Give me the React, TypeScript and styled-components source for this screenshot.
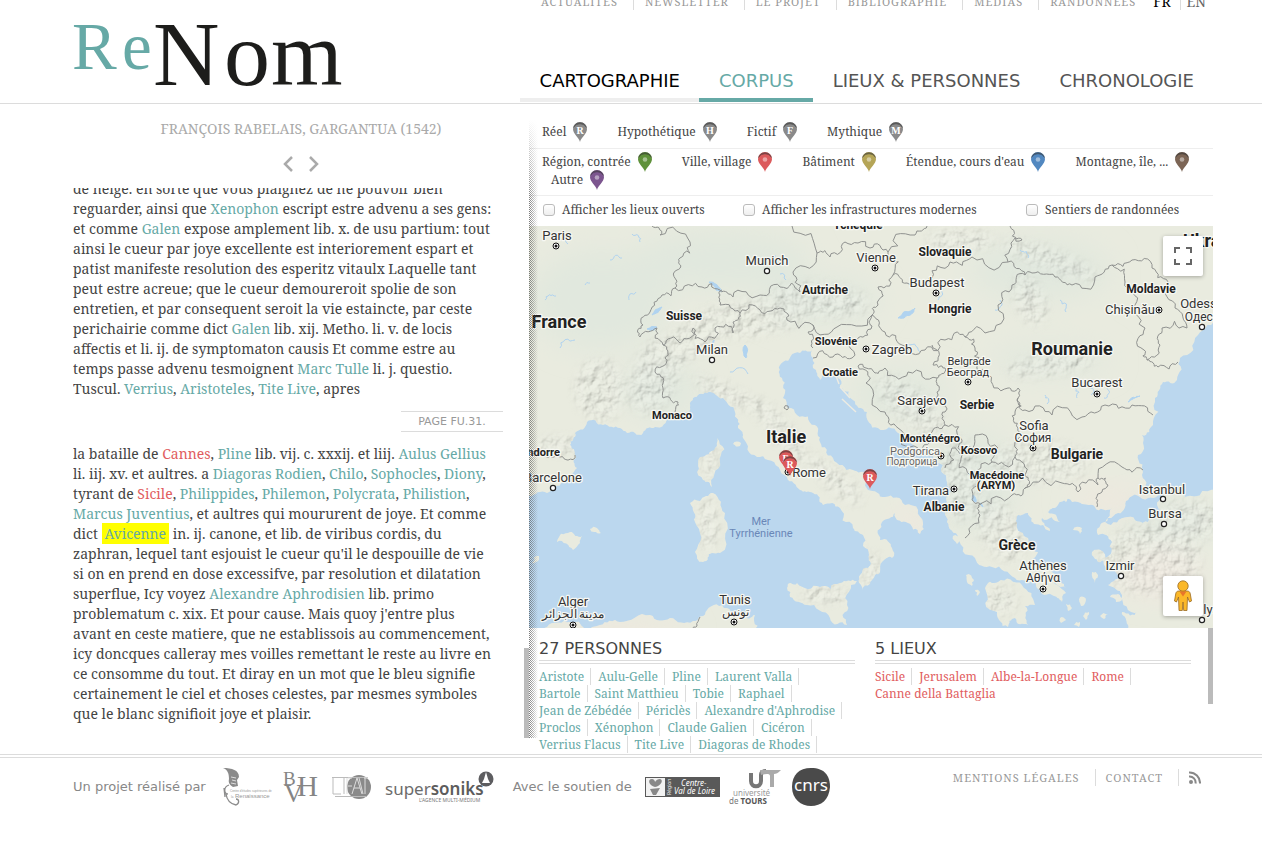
import React from 'react';
import styled, { createGlobalStyle } from 'styled-components';

const serif = "'Noto Serif', 'Liberation Serif', serif";
const sans = "'DejaVu Sans', 'Liberation Sans', sans-serif";
const teal = '#66a9a6';
const red = '#e15d60';
const rule = '#dcdcdc';

const GlobalStyle = createGlobalStyle`
  * { box-sizing: border-box; }
  html { background: #fff; }
  body { margin: 0; font-family: ${serif}; font-size: 14px; line-height: 20px; color: #444; }
  a { color: inherit; text-decoration: none; }
  ul { list-style: none; margin: 0; padding: 0; }
  h1, h2, p { margin: 0; font-weight: normal; }
  button { border: 0; padding: 0; background: none; cursor: pointer; }
`;

/* ---------- header ---------- */

const Header = styled.header`
  display: flex;
  justify-content: space-between;
  height: 104px;
  padding: 0 49px 0 73px;
  border-bottom: 1px solid ${rule};
`;
const LogoLink = styled.a`
  display: block;
  padding-top: 19px;
  svg { display: block; overflow: visible; }
`;
const Menus = styled.div`
  display: flex;
  flex-direction: column;
  justify-content: space-between;
  align-items: flex-end;
  padding-bottom: 1px;
`;
const TopMenu = styled.nav`
  display: flex;
  margin-top: -7px;
  padding-right: 7px;
`;
const SmallLink = styled.a`
  padding: 0 15px 0 11px;
  border-right: 1px solid ${rule};
  font-size: 11px;
  line-height: 17px;
  letter-spacing: 1px;
  text-transform: uppercase;
  color: #999;
  white-space: nowrap;
  &:nth-last-of-type(3) { border-right: 0; }
`;
const LangLink = styled.a<{ $active?: boolean }>`
  padding: 0 0 0 6px;
  line-height: 17px;
  color: ${p => (p.$active ? '#000' : '#666')};
  border-left: ${p => (p.$active ? 0 : 1)}px solid ${rule};
  margin-right: ${p => (p.$active ? 9 : 0)}px;
  margin-left: ${p => (p.$active ? -4 : 0)}px;
`;
const MainMenu = styled.nav`
  display: flex;
`;
const MainLink = styled.a<{ $tone?: 'black' | 'teal' }>`
  padding: 0 19px 7px 20px;
  font: 18px/20px ${sans};
  text-transform: uppercase;
  white-space: nowrap;
  color: ${p => (p.$tone === 'black' ? '#000' : p.$tone === 'teal' ? teal : '#555')};
  border-bottom: 4px solid ${p => (p.$tone === 'black' ? '#eee' : p.$tone === 'teal' ? teal : 'transparent')};
`;

/* ---------- main columns ---------- */

const Main = styled.main`
  display: grid;
  grid-template-columns: 2fr 3fr;
  height: calc(100vh - 195px);
  min-height: 480px;
  padding: 0 49px 0 73px;
`;
const Reader = styled.section`
  display: flex;
  flex-direction: column;
  min-height: 0;
  padding-bottom: 16px;
`;
const WorkTitle = styled.h1`
  padding-top: 15px;
  font-size: 14px;
  line-height: 20px;
  text-align: center;
  text-transform: uppercase;
  color: #aaa;
`;
const Pager = styled.div`
  display: flex;
  justify-content: center;
  gap: 14px;
  padding: 16px 0 15px;
  svg { display: block; }
`;
const TextPane = styled.div`
  display: flex;
  flex: 1;
  min-height: 0;
  overflow: hidden;
`;
const TextFlow = styled.div`
  flex: 1;
  margin-top: -9px;
  white-space: nowrap;
`;
const PageMark = styled.div`
  width: 102px;
  margin: 12px 21px 12px auto;
  border: solid ${rule};
  border-width: 1px 0;
  font: 11px/19px ${sans};
  text-align: center;
  text-transform: uppercase;
  color: #999;
`;
const Person = styled.a<{ $marked?: boolean }>`
  color: ${teal};
  ${p => p.$marked && 'background: #ff0; padding: 1px 3px;'}
`;
const Place = styled.a`
  color: ${red};
`;
const Thumb = styled.div<{ $height: number; $end?: boolean }>`
  flex: none;
  width: 5px;
  height: ${p => p.$height}px;
  align-self: ${p => (p.$end ? 'flex-end' : 'flex-start')};
  background: #bbb;
`;

const Atlas = styled.section`
  position: relative;
  display: flex;
  flex-direction: column;
  min-height: 0;
  min-width: 0;
`;
const EdgeShadow = styled.div`
  position: absolute;
  z-index: 2;
  left: 0;
  top: 16px;
  bottom: 16px;
  width: 9px;
  pointer-events: none;
  background: conic-gradient(#555 25%, transparent 0 50%, #555 0 75%, transparent 0) 0 0 / 2px 2px;
  mask-image: linear-gradient(to right, rgba(0, 0, 0, 0.8), transparent), linear-gradient(to bottom, transparent, #000 80px);
  mask-composite: intersect;
`;
const FilterRow = styled.div`
  display: flex;
  flex-wrap: wrap;
  column-gap: 30px;
  padding: 19px 0 7px 13px;
  border-bottom: 1px solid #eee;
  font-size: 12px;
`;
const KindRow = styled(FilterRow)`
  padding: 4px 0 6px 13px;
  > :last-child { margin-left: 9px; }
`;
const FilterLink = styled.a`
  display: flex;
  align-items: center;
  gap: 7px;
  height: 18px;
  white-space: nowrap;
  svg { flex: none; margin: -1px 0; overflow: visible; }
`;
const ToggleRow = styled.div`
  display: grid;
  grid-template-columns: 200px 283px 1fr;
  padding: 4px 0 6px 13px;
  font-size: 12px;
`;
const Toggle = styled.label`
  display: flex;
  align-items: center;
  white-space: nowrap;
`;
const Check = styled.input`
  appearance: none;
  width: 12px;
  height: 12px;
  margin: 0 7px 0 1px;
  border: 1px solid #bbb;
  border-radius: 3px;
  background: linear-gradient(#fff, #eee);
`;
const MapBox = styled.div`
  position: relative;
  flex: 1;
  min-height: 0;
  overflow: hidden;
  > svg { display: block; width: 100%; height: 100%; }
`;
const MapButton = styled.button<{ $bottom?: boolean }>`
  position: absolute;
  right: 10px;
  ${p => (p.$bottom ? 'bottom: 12px;' : 'top: 10px;')}
  display: grid;
  place-items: center;
  width: 40px;
  height: 40px;
  border-radius: 2px;
  background: #fff;
  box-shadow: 0 1px 4px rgba(0, 0, 0, 0.3);
`;
const IndexPane = styled.div`
  display: flex;
  height: 126px;
  overflow: hidden;
`;
const IndexColumns = styled.div`
  flex: 1;
  display: grid;
  grid-template-columns: 1fr 1fr;
  gap: 20px;
  padding: 10px 17px 0 10px;
`;
const IndexTitle = styled.h2`
  margin-bottom: 4px;
  padding: 1px 0;
  border-bottom: 4px double ${rule};
  font: 16px/20px ${sans};
  text-transform: uppercase;
`;
const Names = styled.ul<{ $color: string }>`
  display: flex;
  flex-wrap: wrap;
  column-gap: 7px;
  padding-right: 10px;
  font-size: 12px;
  line-height: 17px;
  color: ${p => p.$color};
`;
const Name = styled.li<{ $last?: boolean }>`
  padding-right: 6px;
  border-right: ${p => (p.$last ? 0 : 1)}px solid ${rule};
  white-space: nowrap;
`;

/* ---------- footer ---------- */

const Footer = styled.footer`
  display: flex;
  justify-content: space-between;
  border-top: 4px double ${rule};
  padding: 9px 61px 0 73px;
`;
const Partners = styled.div`
  display: flex;
  gap: 19px;
`;
const PartnerGroup = styled.div<{ $gap: number }>`
  display: flex;
  align-items: center;
  height: 40px;
  gap: ${p => p.$gap}px;
  font: 13px/20px ${sans};
  color: #888;
  white-space: nowrap;
  svg { display: block; flex: none; overflow: visible; }
`;
const PartnerLabel = styled.span`
  margin-right: 4px;
`;
const LegalMenu = styled.nav`
  display: flex;
  align-items: flex-start;
  padding-top: 2px;
`;
const LegalLink = styled(SmallLink)`
  padding: 0 15px 0 10px;
  &:nth-last-of-type(3) { border-right: 1px solid ${rule}; }
`;
const RssLink = styled.a`
  padding: 2px 0 0 10px;
  svg { display: block; }
`;

/* ---------- drawings ---------- */

function Logo() {
  return (
    <svg width="272" height="72" viewBox="73 19 272 72" role="img" aria-label="ReNom" fontFamily="'Liberation Serif', serif">
      <text x="72 122" y="69" fontSize="67" fill={teal}>Re</text>
      <text x="153 224 271" y="85" fontSize="92" fill="#1d1d1b">Nom</text>
    </svg>
  );
}

const pinPath = 'M7 20C6 15.500 0 12 0 7A7 7 0 0 1 14 7C14 12 8 15.500 7 20Z';

function Pin({ color, letter, x, y }: { color: string; letter?: string; x?: number; y?: number }) {
  return (
    <svg width="14" height="20" viewBox="0 0 14 20" x={x} y={y} overflow="visible">
      <path d={pinPath} fill={color} />
      <path d="M.5 5.500A6.800 6.800 0 0 1 13.500 5.500A7.500 7.500 0 0 0 .5 5.500Z" fill="#333" stroke="#333" strokeWidth=".7" opacity=".6" />
      {letter ? (
        <text x="7" y="12" fontSize="10" fontWeight="700" textAnchor="middle" fill="#fff" fontFamily="'Liberation Serif', serif">{letter}</text>
      ) : (
        <circle cx="7" cy="7.500" r="2.300" fill="#fff" opacity=".45" />
      )}
    </svg>
  );
}

type Pt = [number, number];

function parse(s: string): Pt[] {
  return s.trim().split(/\s+/).map(p => p.split(',').map(Number) as Pt);
}

/* Breaks segments into smaller wobbling ones, so coasts and borders look natural.
   Very long segments are the map's frame and stay straight. */
function rough(s: string, amount: number, closed: boolean): string {
  let pts = parse(s);
  if (closed) pts.push(pts[0]);
  let seed = pts.length * 97 + Math.round(pts[0][0]);
  const rnd = () => {
    seed = (seed * 16807) % 2147483647;
    return seed / 2147483647 - 0.5;
  };
  for (let level = 0; level < 3; level++) {
    const out: Pt[] = [pts[0]];
    for (let i = 1; i < pts.length; i++) {
      const [ax, ay] = pts[i - 1];
      const [bx, by] = pts[i];
      const len = Math.hypot(bx - ax, by - ay);
      if (len > 3 && len < 60) {
        const k = rnd() * amount;
        out.push([(ax + bx) / 2 - (by - ay) * k, (ay + by) / 2 + (bx - ax) * k]);
      }
      out.push(pts[i]);
    }
    pts = out;
  }
  return 'M' + pts.map(p => p[0].toFixed(1) + ' ' + p[1].toFixed(1)).join('L') + (closed ? 'Z' : '');
}

const lands = [
  '520,499 529,496 547,493 563,482 577,468 575,455 570,445 575,433 587,422 603,425 620,428 627,433 643,433 655,427 670,418 687,412 693,398 707,393 723,398 735,412 738,428 743,438 757,457 768,460 787,477 800,490 813,493 823,505 840,508 853,528 863,535 869,555 868,568 860,575 862,590 870,584 872,580 880,572 882,562 892,558 892,548 880,540 882,522 895,513 908,523 920,534 923,523 905,505 885,497 868,490 866,480 868,475 853,470 833,458 820,442 815,425 797,415 783,398 782,378 783,362 800,353 812,350 813,358 813,368 820,380 827,372 835,373 840,388 853,400 867,412 878,428 898,433 918,453 943,465 947,482 947,502 947,522 958,538 975,558 992,567 1015,578 1034,582 1042,594 1052,595 1062,602 1066,593 1052,575 1032,565 1038,552 1028,538 1017,523 1018,515 1028,513 1034,524 1050,531 1042,518 1060,522 1048,512 1058,505 1078,502 1095,507 1112,508 1100,525 1118,513 1128,500 1148,498 1158,495 1155,492 1142,475 1138,455 1142,435 1153,425 1155,398 1163,382 1177,380 1180,358 1198,335 1220,320 1220,218 520,218',
  '1165,493 1185,497 1220,496 1220,636 1132,636 1128,625 1122,612 1138,612 1122,595 1108,585 1118,575 1105,558 1112,542 1098,535 1105,522 1128,517 1148,522 1172,513 1158,507 1160,499',
  '787,588 797,583 820,587 840,583 857,581 847,605 847,625 830,618 807,605 790,597',
  '690,503 700,501 713,493 725,513 720,553 712,553 703,562 695,552 695,522',
  '717,438 720,462 712,487 703,480 700,457 715,448',
  '557,542 570,532 582,536 580,543 573,550',
  '590,529 597,528 601,533 594,532',
  '532,563 539,556 536,562',
  '520,636 529,628 547,627 570,622 600,625 620,622 650,615 670,618 693,621 707,610 727,608 743,618 755,615 753,636',
  '985,588 998,582 1022,585 1035,605 1025,606 1028,625 1015,618 1008,627 997,612',
  '1040,566 1056,574 1066,588 1056,584',
  '953,536 960,540 957,544', '966,575 974,580 972,586 967,582', '975,590 980,592 977,596',
  '1092,552 1104,553 1106,560 1098,562', '1092,572 1098,575 1095,583', '1110,597 1122,598 1116,602',
  '1073,530 1082,528 1080,534', '1080,597 1086,600 1081,606', '1066,604 1072,608 1068,611',
  '1083,616 1089,612 1086,620', '1060,618 1066,620 1061,623', '1100,616 1108,614 1104,619', '1074,625 1080,622 1079,627',
  '733,444 741,443 740,446', '1063,494 1070,498 1066,502',
];

const borders = [
  '652,226 660,235 690,242 680,258 677,270 675,288 702,287 720,290 733,297 760,295 780,287 800,292 793,272 817,253 792,226',
  '675,288 662,295 650,312 643,325 640,337 657,328 663,345 665,358 655,372 663,388 663,398 678,402 675,412',
  '663,345 680,343 693,328 705,342 715,328 733,333 733,322 740,313 720,305 722,290',
  '740,313 760,310 780,308 787,320 813,325 837,327 872,315',
  '813,325 808,332 813,348', '813,358 833,357 852,358 858,338 872,326 872,315',
  '817,253 830,257 845,242 870,248 888,252 915,235 927,226',
  '888,252 893,275 907,283 932,278 950,262 972,257 1008,262 1015,238 1022,240 1010,226',
  '893,275 878,287 878,305 872,315 885,332 902,345 925,350 945,340 965,337 985,333 998,305 1012,285 1025,275 1008,262',
  '1025,275 1032,273 1055,277 1072,285 1095,277 1112,265 1132,260 1152,268 1168,282 1175,308 1187,328 1162,328 1160,345 1147,360',
  '1112,265 1125,282 1135,305 1145,328 1144,350 1147,360 1158,367 1178,362',
  '932,345 933,365 945,368 937,378', '858,366 866,368 875,373 885,368 908,372 937,378 937,392 945,412 945,425 932,432 922,450',
  '858,366 866,383 885,412 898,428 918,448',
  '965,337 975,348 980,362 988,375 1008,388 1018,388 1018,398 1025,410 1052,415 1082,417 1105,405 1132,405 1153,415',
  '1018,398 1015,412 1018,428 1015,442 1015,457 1025,475 1025,488 1062,483 1078,492 1098,485 1098,478 1122,467 1143,470',
  '1098,478 1108,485 1102,492 1097,507',
  '1025,488 1012,495 982,503 980,515 965,538', '982,503 973,498 970,475 992,462 1015,457',
  '970,475 962,455 952,448 945,468', '945,425 962,440 962,455 975,435 998,448 992,462',
  '529,453 545,455 560,457 575,455', '693,636 697,626 700,617', '784,408 788,406 787,410 784,408',
];

const lakes = [
  '898,318 912,310 915,308 904,318', '709,282 722,291 716,290', '647,329 657,327 654,330', '745,345 746,358 744,356',
  '714,340 712,345', '973,495 976,502 972,499', '652,315 662,307', '980,503 983,507', '1128,402 1140,396',
];

const streams = [
  '560,240 568,244', '585,285 590,283', '632,234 640,242', '629,300 636,292', '730,372 748,374', '770,260 776,256', '1185,420 1192,416',
  '780,274 786,280', '1020,250 1028,258', '1045,395 1047,404', '1075,388 1077,398', '1090,385 1091,395', '1107,388 1104,398', '940,290 938,300',
  '905,345 920,352', '560,348 575,340', '610,260 622,258', '1060,300 1066,312', '1000,300 995,310', '545,300 556,296',
];

const massifs: [number, number, number, number, number][] = [
  [690, 340, 50, 16, -35], [750, 318, 60, 18, -8], [820, 300, 48, 16, 5], [655, 375, 22, 40, 20], [600, 390, 25, 30, 0], [730, 395, 40, 8, 25],
  [780, 430, 40, 10, 50], [835, 480, 34, 10, 40], [872, 575, 8, 24, 0], [910, 405, 40, 16, 40], [960, 480, 20, 40, 0], [1000, 530, 20, 34, -30],
  [1050, 365, 44, 9, -8], [1030, 300, 14, 26, -20], [1050, 260, 50, 10, 20], [1040, 462, 48, 20, 0], [710, 462, 8, 18, 0], [708, 525, 10, 26, 0],
  [1000, 600, 16, 14, 0], [1150, 560, 50, 34, 0], [1190, 520, 30, 20, 0], [560, 445, 26, 8, 0], [825, 595, 24, 8, 0], [960, 240, 34, 10, 0],
];

type Label = [string, number, number, number, ('b' | 'n' | 's')?];
const labels: Label[] = [
  ['France', 559, 328, 18, 'b'], ['Paris', 557, 240, 13], ['Munich', 767, 265, 13], ['Tchéquie', 858, 229, 12, 'b'],
  ['Autriche', 825, 294, 12, 'b'], ['Suisse', 684, 320, 12, 'b'], ['Milan', 712, 354, 13], ['Slovénie', 836, 345, 11, 'b'],
  ['Croatie', 840, 376, 11, 'b'], ['Monaco', 672, 419, 11, 'b'], ['Slovaquie', 945, 256, 12, 'b'], ['Vienne', 876, 262, 13],
  ['Budapest', 937, 287, 13], ['Hongrie', 950, 313, 12, 'b'], ['Zagreb', 892, 354, 13], ['Belgrade', 969, 365, 11],
  ['Београд', 968, 376, 11], ['Sarajevo', 922, 405, 13], ['Serbie', 977, 409, 12, 'b'], ['Roumanie', 1072, 355, 18, 'b'],
  ['Bucarest', 1097, 387, 13], ['Moldavie', 1151, 293, 12, 'b'], ['Chișinău', 1130, 314, 13], ['Odessa', 1202, 308, 13],
  ['Одеса', 1202, 321, 12], ['Ukraine', 1214, 247, 18, 'b'], ['Sofia', 1034, 430, 13], ['София', 1033, 442, 12],
  ['Bulgarie', 1077, 459, 14, 'b'], ['Monténégro', 930, 442, 11, 'b'], ['Podgorica', 915, 455, 11, 's'], ['Подгорица', 912, 465, 10, 's'],
  ['Kosovo', 979, 454, 11, 'b'], ['Macédoine', 997, 479, 11, 'b'], ['(ARYM)', 996, 489, 11, 'b'], ['Tirana', 931, 495, 13],
  ['Albanie', 944, 511, 12, 'b'], ['Istanbul', 1162, 494, 13], ['Bursa', 1165, 518, 13], ['Grèce', 1017, 550, 14, 'b'],
  ['Athènes', 1043, 570, 13], ['Αθήνα', 1043, 582, 12], ['Izmir', 1120, 570, 13], ['Antalya', 1198, 614, 13],
  ['Italie', 786, 443, 18, 'b'], ['Rome', 809, 477, 13], ['Andorre', 540, 456, 11, 'b'], ['Barcelone', 553, 482, 13],
  ['Alger', 573, 606, 13], ['مدينة الجزائر', 573, 618, 12], ['Tunis', 735, 604, 13], ['تونس', 735, 616, 12],
];
const capitals: Pt[] = [[556, 246], [875, 268], [936, 293], [866, 349], [968, 382], [922, 411], [1097, 394], [1159, 310], [1033, 448], [941, 456], [954, 489], [1043, 589], [788, 472], [573, 625], [734, 622]];
const cities: Pt[] = [[767, 271], [712, 360], [1202, 327], [1163, 499], [1164, 524], [1121, 576], [553, 488], [1202, 620]];

function EuropeMap() {
  return (
    <svg viewBox="529 226 684 402" preserveAspectRatio="xMidYMid slice" role="img" aria-label="Carte des lieux" fontFamily="Roboto, sans-serif">
      <defs>
        <clipPath id="land">{lands.map(l => <path key={l} d={rough(l, 0.5, true)} />)}</clipPath>
        <filter id="relief" x="0" y="0" width="100%" height="100%">
          <feTurbulence type="fractalNoise" baseFrequency="0.1" numOctaves="4" seed="4" result="n" />
          <feDiffuseLighting in="n" lightingColor="#f4f7f0" surfaceScale="4.500" diffuseConstant="1.050"><feDistantLight azimuth="225" elevation="52" /></feDiffuseLighting>
        </filter>
        <filter id="soft"><feGaussianBlur stdDeviation="5" /></filter>
        <filter id="wide"><feGaussianBlur stdDeviation="14" /></filter>
        <mask id="massifs">
          <g filter="url(#soft)">
            {massifs.map(([x, y, rx, ry, a]) => <ellipse key={x + '-' + y} cx={x} cy={y} rx={rx} ry={ry} fill="#fff" transform={`rotate(${a} ${x} ${y})`} />)}
          </g>
        </mask>
      </defs>
      <rect x="520" y="218" width="700" height="420" fill="#bbd7ee" />
      <g clipPath="url(#land)">
        <rect x="520" y="218" width="700" height="420" fill="#e9ebdf" />
        <g fill="#e1e8de" filter="url(#wide)">
          <ellipse cx="600" cy="300" rx="70" ry="50" /><ellipse cx="720" cy="260" rx="90" ry="30" /><ellipse cx="900" cy="395" rx="50" ry="24" />
          <ellipse cx="1040" cy="270" rx="70" ry="30" /><ellipse cx="1050" cy="360" rx="60" ry="14" /><ellipse cx="970" cy="480" rx="50" ry="50" />
          <ellipse cx="820" cy="300" rx="60" ry="24" /><ellipse cx="660" cy="390" rx="40" ry="30" /><ellipse cx="1170" cy="520" rx="50" ry="20" />
        </g>
        <g fill="#f0e7de" filter="url(#wide)">
          <ellipse cx="1160" cy="575" rx="40" ry="20" /><ellipse cx="915" cy="522" rx="22" ry="10" /><ellipse cx="1110" cy="500" rx="40" ry="10" /><ellipse cx="620" cy="632" rx="70" ry="8" />
        </g>
        <g mask="url(#massifs)" opacity=".3"><rect x="520" y="218" width="700" height="420" filter="url(#relief)" /></g>
        <g fill="none" stroke="#b0d3f0" strokeWidth="1">{streams.map(s => <path key={s} d={rough(s, 0.6, false)} />)}</g>
        <g fill="#b0d3f0" stroke="#b0d3f0" strokeWidth="1">{lakes.map(s => <path key={s} d={rough(s, 0.3, true)} />)}</g>
      </g>
      <g fill="none" stroke="#909290" strokeWidth="1">{borders.map(b => <path key={b} d={rough(b, 0.7, false)} />)}</g>
      <path d="M840 387L850 398M842 399L856 412M836 376L839 384" stroke="#ecebe2" strokeWidth="1.500" />
      <g fill="#fff" stroke="#222" strokeWidth="1.200">{cities.map(([x, y]) => <circle key={x + '-' + y} cx={x} cy={y} r="2.600" />)}</g>
      {capitals.map(([x, y]) => (
        <g key={x + '-' + y}><circle cx={x} cy={y} r="3" fill="#fff" stroke="#111" /><circle cx={x} cy={y} r="1.500" fill="#111" /></g>
      ))}
      <g textAnchor="middle" stroke="#f7f8f3" strokeWidth="2.500" strokeLinejoin="round" paintOrder="stroke">
        {labels.map(([t, x, y, size, kind]) => (
          <text key={t} x={x} y={y} fontSize={size} fontWeight={kind === 'b' ? 700 : 400} fill={kind === 'b' ? '#222' : kind === 's' ? '#666' : '#333'}>{t}</text>
        ))}
      </g>
      <g textAnchor="middle" fontSize="11" fill="#6a87b8"><text x="761" y="525">Mer</text><text x="761" y="537">Tyrrhénienne</text></g>
      <Pin x={779} y={450} color="#dc5a5c" letter="R" />
      <Pin x={783} y={456} color="#dc5a5c" letter="R" />
      <Pin x={863} y={469} color="#dc5a5c" letter="R" />
    </svg>
  );
}

function Pegman() {
  return (
    <svg width="18" height="32" viewBox="0 0 18 32" aria-hidden="true">
      <g fill="#fbb829" stroke="#9a6b23" strokeWidth=".8">
        <path d="M5 11h8c2 0 3 1 3.300 3L17.500 21l-2 1-2-5-.5 13.500H9.700L9 22l-.7 8.500H5L4.500 17l-2 5-2-1L1.700 14C2 12 3 11 5 11Z" />
        <circle cx="9" cy="6" r="5.200" />
      </g>
      <path d="M5.500 11.500h7L9 16.500Z" fill="#e8762a" />
    </svg>
  );
}

function CesrLogo() {
  return (
    <svg width="47" height="38" viewBox="0 0 47 38" role="img" aria-label="Centre d'études supérieures de la Renaissance" fontFamily="'Liberation Sans', sans-serif">
      <path d="M0 0C9 0 16 2 16 9l-2 3 1 6-5 1c-3-2-5-4-4-8C6 6 5 2 0 0Z" fill="#8b8b8b" />
      <path d="M8 9l5 1M9 12l4 1M8 15l5 1" stroke="#ddd" />
      <path d="M6 17C0 19 1 26 5 26M3 26c1 7 5 10 10 11 4-2 3-6 0-6M1 20l1 9" fill="none" stroke="#8b8b8b" strokeWidth="1.300" />
      <text x="7" y="24" fontSize="3" fill="#999">Centre d'études supérieures de</text>
      <text x="8" y="30" fontSize="3" fill="#999">la</text>
      <text x="12" y="30" fontSize="6" fill="#999">Renaissance</text>
    </svg>
  );
}
function BvhLogo() {
  return (
    <svg width="36" height="32" viewBox="0 0 36 32" role="img" aria-label="BVH" fill="#858585" fontFamily="'Liberation Serif', serif">
      <text x="0" y="14" fontSize="19">B</text><text x="1" y="31" fontSize="26">V</text><text x="14" y="25" fontSize="29">H</text>
    </svg>
  );
}
function LifatLogo() {
  return (
    <svg width="40" height="26" viewBox="0 0 40 26" role="img" aria-label="LIFAT">
      <circle cx="27" cy="13" r="12" fill="#8a8a8a" />
      <path d="M1 4v16h8M12 4v16M0 3.500h36M3 22.500h32" fill="none" stroke="#bbb" />
      <path d="M15 4v16M16 4h4M16 12h4M20 20l5-16 5 16M22 14h6M32 4h4M33 4v16M27 4l4 16" fill="none" stroke="#ddd" />
    </svg>
  );
}
function SupersoniksLogo() {
  return (
    <svg width="109" height="34" viewBox="0 0 109 34" role="img" aria-label="Supersoniks" fontFamily="'Noto Sans', sans-serif">
      <text x="0" y="25" fontSize="17" fill="#6c6c6c">super<tspan fontWeight="600" fill="#5c5c5c">soniks</tspan></text>
      <text x="34" y="32" fontSize="5" fill="#777">L'AGENCE MULTI-MÉDIUM</text>
      <circle cx="101" cy="9" r="7.500" fill="#5d5d60" /><path d="M101 2l2 7 2 4h-8l2-4Z" fill="#fff" />
    </svg>
  );
}
function RegionLogo() {
  return (
    <svg width="75" height="20" viewBox="0 0 75 20" role="img" aria-label="Région Centre-Val de Loire" fontFamily="'Noto Sans', sans-serif">
      <rect width="75" height="20" fill="#595959" /><rect x="1" y="1" width="19" height="18" fill="#f2f2f2" />
      <path d="M10 10C4 9 2 2 7 2c2 0 3 2 3 3 1-2 3-3 5-3 4 1 1 7-5 8ZM5 12l10-1-4 7H8Z" fill="#888" />
      <text transform="translate(26 18) rotate(-90)" fontSize="5" fill="#eee">Région</text>
      <g fill="#fff" fontSize="8" fontStyle="italic"><text x="36" y="9">Centre-</text><text x="29" y="17">Val de Loire</text></g>
    </svg>
  );
}
function ToursLogo() {
  return (
    <svg width="53" height="36" viewBox="0 0 53 36" role="img" aria-label="Université de Tours" fontFamily="'Noto Sans', sans-serif">
      <path d="M22 4v8c0 7 10 7 10 0V6c0-3 2-4 5-4" fill="none" stroke="#777" strokeWidth="4" /><path d="M31 1h21c-3 3-5 4-7 4v13h-4V7c0-3-5-2-9-1Z" fill="#aaa" />
      <text x="4" y="27" fontSize="8" fill="#999">université</text><text x="0" y="35" fontSize="8" fill="#777">de <tspan fontWeight="700" fill="#555">TOURS</tspan></text>
    </svg>
  );
}
function CnrsLogo() {
  return (
    <svg width="40" height="40" viewBox="0 0 40 40" role="img" aria-label="CNRS">
      <path d="M20 1C34 1 39 9 39 20 38 33 30 39 20 39S1 32 1 20 8 1 20 1Z" fill="#4a4a4a" />
      <text x="20" y="24" fontSize="17" textAnchor="middle" fill="#fff" fontFamily="'Noto Sans', sans-serif">cnrs</text>
    </svg>
  );
}

/* ---------- data ---------- */

const natures = [['Réel', 'R'], ['Hypothétique', 'H'], ['Fictif', 'F'], ['Mythique', 'M']];
const kinds = [
  ['Région, contrée', '#5f913a'], ['Ville, village', '#dc5a5c'], ['Bâtiment', '#b5a557'],
  ["Étendue, cours d'eau", '#5288c0'], ['Montagne, île, ...', '#7c6555'], ['Autre', '#7c558f'],
];
const people = [
  'Aristote', 'Aulu-Gelle', 'Pline', 'Laurent Valla', 'Bartole', 'Saint Matthieu', 'Tobie', 'Raphael', 'Jean de Zébédée', 'Périclès',
  "Alexandre d'Aphrodise", 'Proclos', 'Xénophon', 'Claude Galien', 'Cicéron', 'Verrius Flacus', 'Tite Live', 'Diagoras de Rhodes',
];
const places = ['Sicile', 'Jerusalem', 'Albe-la-Longue', 'Rome', 'Canne della Battaglia'];
const topLinks = ['Actualités', 'Newsletter', 'Le projet', 'Bibliographie', 'Médias', 'Randonnées'];

const P = ({ children, marked }: { children: React.ReactNode; marked?: boolean }) => <Person href="#" $marked={marked}>{children}</Person>;

export default function App() {
  return (
    <>
      <GlobalStyle />
      <Header>
        <LogoLink href="#"><Logo /></LogoLink>
        <Menus>
          <TopMenu>
            {topLinks.map(t => <SmallLink key={t} href="#">{t}</SmallLink>)}
            <LangLink href="#" $active>FR</LangLink>
            <LangLink href="#">EN</LangLink>
          </TopMenu>
          <MainMenu>
            <MainLink href="#" $tone="black">Cartographie</MainLink>
            <MainLink href="#" $tone="teal">Corpus</MainLink>
            <MainLink href="#">Lieux &amp; Personnes</MainLink>
            <MainLink href="#">Chronologie</MainLink>
          </MainMenu>
        </Menus>
      </Header>

      <Main>
        <Reader>
          <WorkTitle>François Rabelais, Gargantua (1542)</WorkTitle>
          <Pager>
            <button aria-label="Page précédente"><svg width="12" height="18" viewBox="0 0 12 18"><path d="M10 2L3 9l7 7" fill="none" stroke="#aaa" strokeWidth="2.500" /></svg></button>
            <button aria-label="Page suivante"><svg width="12" height="18" viewBox="0 0 12 18"><path d="M2 2l7 7-7 7" fill="none" stroke="#aaa" strokeWidth="2.500" /></svg></button>
          </Pager>
          <TextPane>
            <TextFlow>
              <p>
                de neige. en sorte que vous plaignez de ne pouvoir bien<br />
                reguarder, ainsi que <P>Xenophon</P> escript estre advenu a ses gens:<br />
                et comme <P>Galen</P> expose amplement lib. x. de usu partium: tout<br />
                ainsi le cueur par joye excellente est interiorement espart et<br />
                patist manifeste resolution des esperitz vitaulx Laquelle tant<br />
                peut estre acreue; que le cueur demoureroit spolie de son<br />
                entretien, et par consequent seroit la vie estaincte, par ceste<br />
                perichairie comme dict <P>Galen</P> lib. xij. Metho. li. v. de locis<br />
                affectis et li. ij. de symptomaton causis Et comme estre au<br />
                temps passe advenu tesmoignent <P>Marc Tulle</P> li. j. questio.<br />
                Tuscul. <P>Verrius</P>, <P>Aristoteles</P>, <P>Tite Live</P>, apres
              </p>
              <PageMark>Page fu.31.</PageMark>
              <p>
                la bataille de <Place href="#">Cannes</Place>, <P>Pline</P> lib. vij. c. xxxij. et liij. <P>Aulus Gellius</P><br />
                li. iij. xv. et aultres. a <P>Diagoras Rodien</P>, <P>Chilo</P>, <P>Sophocles</P>, <P>Diony</P>,<br />
                tyrant de <Place href="#">Sicile</Place>, <P>Philippides</P>, <P>Philemon</P>, <P>Polycrata</P>, <P>Philistion</P>,<br />
                <P>Marcus Juventius</P>, et aultres qui moururent de joye. Et comme<br />
                dict <P marked>Avicenne</P> in. ij. canone, et lib. de viribus cordis, du<br />
                zaphran, lequel tant esjouist le cueur qu'il le despouille de vie<br />
                si on en prend en dose excessifve, par resolution et dilatation<br />
                superflue, Icy voyez <P>Alexandre Aphrodisien</P> lib. primo<br />
                problematum c. xix. Et pour cause. Mais quoy j'entre plus<br />
                avant en ceste matiere, que ne establissois au commencement,<br />
                icy doncques calleray mes voilles remettant le reste au livre en<br />
                ce consomme du tout. Et diray en un mot que le bleu signifie<br />
                certainement le ciel et choses celestes, par mesmes symboles<br />
                que le blanc signifioit joye et plaisir.
              </p>
            </TextFlow>
            <Thumb $height={90} $end />
          </TextPane>
        </Reader>

        <Atlas>
          <EdgeShadow />
          <FilterRow>
            {natures.map(([t, l]) => <FilterLink key={t} href="#">{t}<Pin color="#8a8a8a" letter={l} /></FilterLink>)}
          </FilterRow>
          <KindRow>
            {kinds.map(([t, c]) => <FilterLink key={t} href="#">{t}<Pin color={c} /></FilterLink>)}
          </KindRow>
          <ToggleRow>
            <Toggle><Check type="checkbox" />Afficher les lieux ouverts</Toggle>
            <Toggle><Check type="checkbox" />Afficher les infrastructures modernes</Toggle>
            <Toggle><Check type="checkbox" />Sentiers de randonnées</Toggle>
          </ToggleRow>
          <MapBox>
            <EuropeMap />
            <MapButton aria-label="Plein écran">
              <svg width="18" height="18" viewBox="0 0 18 18"><path d="M1 6V1H6M12 1h5V6M17 12v5H12M6 17H1V12" fill="none" stroke="#666" strokeWidth="2" /></svg>
            </MapButton>
            <MapButton $bottom aria-label="Street View"><Pegman /></MapButton>
          </MapBox>
          <IndexPane>
            <IndexColumns>
              <div>
                <IndexTitle>27 Personnes</IndexTitle>
                <Names $color={teal}>{people.map(n => <Name key={n}><a href="#">{n}</a></Name>)}</Names>
              </div>
              <div>
                <IndexTitle>5 Lieux</IndexTitle>
                <Names $color={red}>{places.map((n, i) => <Name key={n} $last={i === places.length - 1}><a href="#">{n}</a></Name>)}</Names>
              </div>
            </IndexColumns>
            <Thumb $height={76} />
          </IndexPane>
        </Atlas>
      </Main>

      <Footer>
        <Partners>
          <PartnerGroup $gap={13}>
            <PartnerLabel>Un projet réalisé par</PartnerLabel>
            <CesrLogo /><BvhLogo /><LifatLogo /><SupersoniksLogo />
          </PartnerGroup>
          <PartnerGroup $gap={9}>
            <PartnerLabel>Avec le soutien de</PartnerLabel>
            <RegionLogo /><ToursLogo /><CnrsLogo />
          </PartnerGroup>
        </Partners>
        <LegalMenu>
          <LegalLink href="#">Mentions légales</LegalLink>
          <LegalLink href="#">Contact</LegalLink>
          <RssLink href="#" aria-label="RSS">
            <svg width="12" height="13" viewBox="0 0 12 13" fill="none" stroke="#888" strokeWidth="2"><circle cx="2" cy="11" r="1" /><path d="M0 5.500A6 6 0 0 1 6.500 12.500M0 1.500A10.500 10.500 0 0 1 11 12.500" /></svg>
          </RssLink>
        </LegalMenu>
      </Footer>
    </>
  );
}
